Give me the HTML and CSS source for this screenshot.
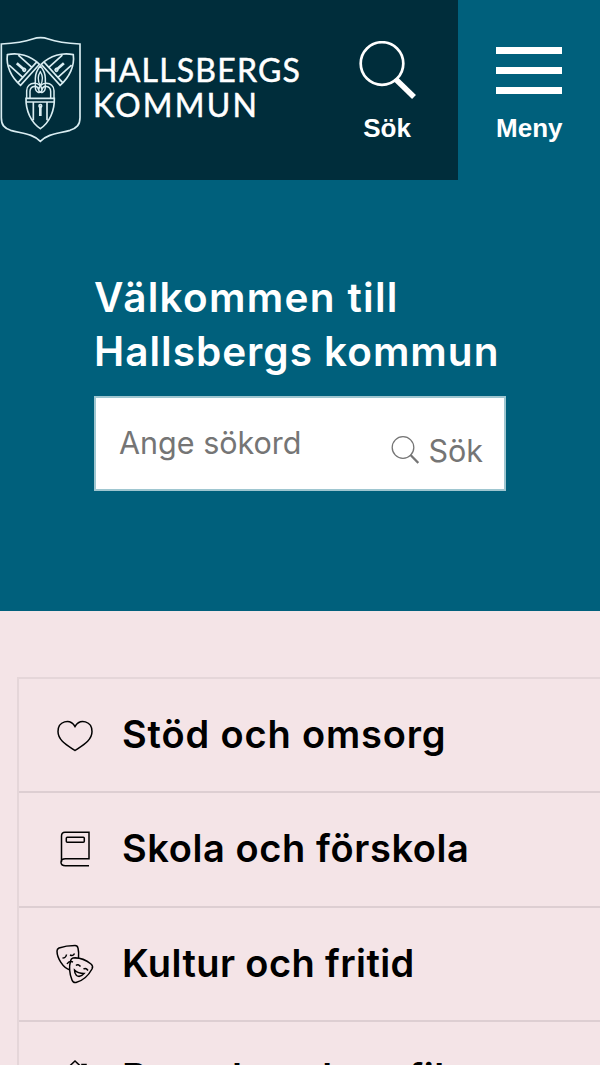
FILE: index.html
```html
<!DOCTYPE html>
<html lang="sv">
<head>
    <meta charset="UTF-8">
    <meta name="viewport" content="width=device-width, initial-scale=1.0">
    <title>Hallsbergs kommun</title>
    <link rel="stylesheet" href="styles.css">
</head>
<body>

    <header class="header">
        <div class="header-main">
            <a class="logo" href="#">
                <svg class="logo-shield" viewBox="0 30 246 330" fill="none" stroke="currentColor" stroke-width="5">
                    <path d="M4 57Q65 54 98 42Q122 34 145 42Q178 54 240 57V278C240 300 230 309 210 316C175 326 145 325 121 349C97 325 67 326 32 316C12 309 4 300 4 278Z"/>
                    <!-- Three locks, one in each direction -->
                    <g id="lock">
                        <path d="M78 220H163C164 257 149 292 121 311C93 292 77 257 78 220ZM78 231H163M100 231V286M141 231V286" stroke-width="5"/>
                        <path d="M121 243V273" stroke-width="8"/>
                        <circle cx="121" cy="243" r="4"/>
                    </g>
                    <use href="#lock" transform="rotate(132 121 178)"/>
                    <use href="#lock" transform="translate(242 0) scale(-1 1) rotate(132 121 178)"/>
                    <!-- Linked shackles -->
                    <path d="M80 220V197C80 169 124 167 126 195C122 208 106 203 106 186V160C106 145 113 132 121 122C129 132 136 145 136 160V186C136 203 120 208 116 195C118 167 162 169 162 197V220M90 220V199C91 181 112 179 116 195M152 220V199C151 181 130 179 126 195" stroke-width="4.5"/>
                    <path d="M121 140C112 154 114 170 121 182C128 170 130 154 121 140Z" stroke-width="4"/>
                </svg>
                <span class="logo-text">
                    <span class="logo-top">HALLSBERGS</span>
                    <span class="logo-bottom">KOMMUN</span>
                </span>
            </a>
            <button class="header-btn search-toggle">
                <svg class="search-icon" viewBox="0 0 58 60" fill="none" stroke="currentColor">
                    <circle cx="24" cy="22.5" r="21.3" stroke-width="2.7"/>
                    <path d="M38 38.5L56 56" stroke-width="5.5"/>
                </svg>
                <span>Sök</span>
            </button>
        </div>
        <button class="header-btn menu-toggle">
            <span class="menu-bars"><i></i><i></i><i></i></span>
            <span>Meny</span>
        </button>
    </header>

    <section class="hero">
        <h1><span class="hero-top">Välkommen till</span><br><span class="hero-bottom">Hallsbergs kommun</span></h1>
        <form class="search-form">
            <input type="text" class="search-input" placeholder="Ange sökord">
            <button type="button" class="search-btn">
                <svg viewBox="0 0 28 28" fill="none" stroke="currentColor">
                    <circle cx="12" cy="11.5" r="10.8" stroke-width="1.3"/>
                    <path d="M19.300 18.800L27.300 27" stroke-width="2.3"/>
                </svg>
                <span>Sök</span>
            </button>
        </form>
    </section>

    <main class="content">
        <nav class="nav-list">
            <a class="nav-item" href="#">
                <svg viewBox="0 0 40 40" fill="none" stroke="currentColor" stroke-width="1.5">
                    <path d="M20 11.500C15 3 3 6 3 16.500C3 25 11 29.500 20 35.500C29 29.500 37 25 37 16.500C37 6 25 3 20 11.500Z"/>
                </svg>
                <span class="nav-care">Stöd och omsorg</span>
            </a>
            <a class="nav-item" href="#">
                <svg viewBox="0 0 40 40" fill="none" stroke="currentColor" stroke-width="1.5">
                    <path d="M34 36.700H10.500C4.500 36.700 4.500 29.800 10.500 29.800H34V3.200H10Q6.500 3.200 6.500 7V33"/>
                    <rect x="11.300" y="8.300" width="18" height="5" rx="1"/>
                </svg>
                <span class="nav-school">Skola och förskola</span>
            </a>
            <a class="nav-item" href="#">
                <svg viewBox="0 0 40 40" fill="none" stroke="currentColor" stroke-width="1.5">
                    <path d="M15 26C8 24 2 14 2 7Q2 5 4 4Q11 1.500 20 1.500Q22.500 1.500 23 4Q24 8 23.500 14"/>
                    <path d="M18 14Q27 13 36 20Q38.500 22 37 25Q31 36 21 38.500Q18 39 17 36Q13 26 15.500 17Q16 14.500 18 14Z"/>
                    <path d="M7.500 14Q11 14 11.500 10.500M15 11Q18 12.500 19.500 9.500M12 20Q14 16.500 18 18M21 21.500Q23 19.500 25.500 22.500M28.500 25Q31 23.500 33 26.500M19.500 26Q23 29.500 29 29.500Q25 34 21.500 31.500Q19.500 29.500 19.500 26Z"/>
                </svg>
                <span class="nav-culture">Kultur och fritid</span>
            </a>
            <a class="nav-item" href="#">
                <svg viewBox="0 0 40 40" fill="none" stroke="currentColor" stroke-width="1.5">
                    <path d="M3 19L20 3L37 19M7 15V37H33V15M27 9V6.500H31V13M16 37V25H24V37"/>
                </svg>
                <span class="nav-living">Boende och trafik</span>
            </a>
        </nav>
    </main>

</body>
</html>
```
FILE: styles.css
```css
* {
    margin: 0;
    padding: 0;
    box-sizing: border-box;
}

html {
    overflow: hidden;
}

body {
    width: 600px;
    height: 1065px;
    overflow: hidden;
    background-color: #f4e4e7;
    font-family: Inter, sans-serif;
    color: #000;
}

a {
    color: inherit;
    text-decoration: none;
}

button {
    border: none;
    background: none;
    color: inherit;
    cursor: pointer;
}

svg {
    display: block;
    flex: none;
}

/* Header */
.header {
    display: flex;
    height: 180px;
    background-color: #00607c;
    color: #fff;
}

.header-main {
    display: flex;
    width: 457.5px;
    background-color: #002d3b;
}

.logo {
    display: flex;
    width: 317px;
    padding-top: 35px;
}

.logo-shield {
    width: 82px;
    height: 110px;
    color: #d9edf2;
}

.logo-text {
    display: flex;
    flex-direction: column;
    margin: 17px 0 0 11px;
    font-family: Lato, sans-serif;
    font-size: 32px;
    line-height: 35px;
    white-space: nowrap;
    -webkit-text-stroke: 0.5px #fff;
}

.logo-top {
    letter-spacing: 1.2px;
}

.logo-bottom {
    letter-spacing: 2.2px;
}

.header-btn {
    display: flex;
    flex-direction: column;
    align-items: center;
    font-family: "Liberation Sans", sans-serif;
    font-size: 26px;
    font-weight: bold;
    line-height: 30px;
}

.search-toggle {
    width: 141px;
    padding-top: 41px;
}

.search-icon {
    width: 58px;
    height: 60px;
    margin-bottom: 12px;
}

.menu-toggle {
    width: 142.5px;
    padding: 47px 0 0 1px;
}

.menu-bars {
    display: flex;
    flex-direction: column;
    gap: 13px;
    width: 66px;
    margin-bottom: 19px;
}

.menu-bars i {
    height: 7px;
    background-color: #fff;
}

/* Hero */
.hero {
    height: 431px;
    padding: 91px 94px 0;
    background-color: #00607c;
    color: #fff;
}

.hero h1 {
    font-size: 40.5px;
    font-weight: 600;
    line-height: 54px;
    white-space: nowrap;
}

.hero-top {
    letter-spacing: 1.3px;
}

.hero-bottom {
    letter-spacing: 1px;
}

.search-form {
    display: flex;
    justify-content: space-between;
    width: 412px;
    height: 95px;
    margin-top: 17px;
    padding: 0 21px 0 23px;
    background-color: #fff;
    border: 2px solid #9fc6d0;
    color: #757575;
}

.search-input {
    width: 220px;
    height: 89px;
    border: none;
    outline: none;
    font-family: Inter, sans-serif;
    font-size: 30.5px;
}

.search-input::placeholder {
    color: #757575;
    opacity: 1;
}

.search-btn {
    display: flex;
    align-items: center;
    gap: 9px;
    padding-top: 13px;
    font-family: Inter, sans-serif;
    font-size: 30.5px;
}

.search-btn svg {
    width: 28px;
    height: 28px;
}

/* Navigation list */
.content {
    padding: 66px 0 0 17px;
}

.nav-list {
    border: 2px solid #e5d6d9;
    border-right: none;
    border-bottom: none;
}

.nav-item {
    display: flex;
    align-items: center;
    gap: 27px;
    height: 114.33px;
    padding: 0 0 2px 36px;
    border-bottom: 2px solid #ddced2;
    font-size: 38px;
    font-weight: 600;
    white-space: nowrap;
}

.nav-item svg {
    width: 40px;
    height: 40px;
    margin-top: 2px;
}

.nav-care {
    letter-spacing: 0.85px;
}

.nav-school {
    letter-spacing: 0.6px;
}

.nav-culture {
    letter-spacing: 0.4px;
}

.nav-living {
    letter-spacing: 0.6px;
}
```
